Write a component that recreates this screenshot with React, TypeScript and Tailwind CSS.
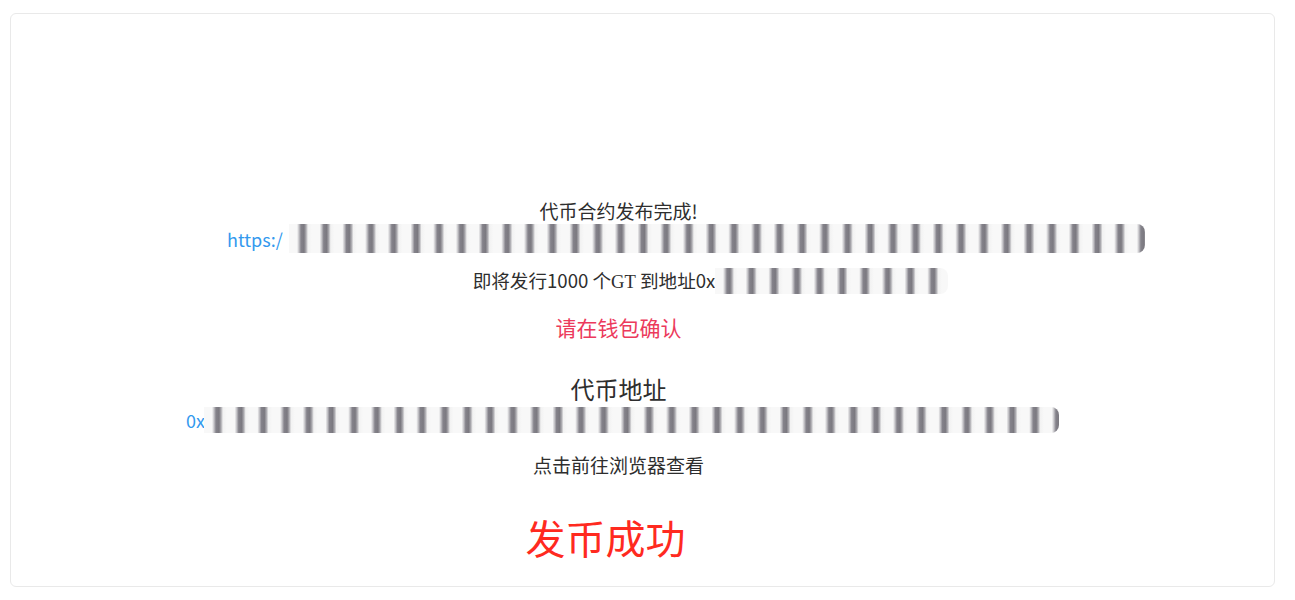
const stripes =
  'bg-[image:repeating-linear-gradient(90deg,#f8f8f8_0px,#f8f8f8_8px,#c4c3c7_10px,#84828a_12px,#7b7980_15px,#aaa9ae_17px,#f2f2f2_19px,#f8f8f8_22.7px)]';

const Redacted = ({ width, height }: { width: number; height: number }) => (
  <div className={`${stripes} rounded-r-lg shrink-0`} style={{ width, height }} />
);

const App = () => {
  return (
    <div className="min-h-screen bg-white pt-[13px] pl-[10px] pr-[20px] font-['Noto_Sans_CJK_SC','Noto_Sans',sans-serif] text-[#2e2e2e]">
      <div className="h-[574px] rounded-md border border-[#e9e9e9] bg-white">
        <div className="flex flex-col items-center pr-[48px] pt-[182px]">
          <div className="h-[28px] flex items-center text-[19px] leading-none">代币合约发布完成!</div>

          <div className="h-[29px] flex items-center pl-[135px]">
            <span className="w-[62px] whitespace-nowrap text-[18px] leading-none text-[#3399ee]">https:/</span>
            <Redacted width={856} height={29} />
          </div>

          <div className="mt-[13px] h-[30px] flex items-center pl-[184px]">
            <span className="text-[18.6px] leading-none whitespace-nowrap">
              即将发行1000 个<span className="font-['Liberation_Serif',serif]">GT</span> 到地址0x
            </span>
            <Redacted width={233} height={26} />
          </div>

          <div className="mt-[16px] h-[30px] flex items-center text-[21px] leading-none text-[#ec3a5c]">请在钱包确认</div>

          <div className="mt-[32px] h-[30px] flex items-center text-[24px] leading-none">代币地址</div>

          <div className="mt-[2px] h-[28px] flex items-center pl-[8px]">
            <span className="w-[18px] whitespace-nowrap text-[18px] leading-none text-[#3399ee]">0x</span>
            <Redacted width={855} height={26} />
          </div>

          <div className="mt-[16px] h-[28px] flex items-center text-[19px] leading-none">点击前往浏览器查看</div>

          <div className="mt-[34px] h-[50px] flex items-center pr-[26px] text-[40px] leading-none text-[#ff2a1f]">发币成功</div>
        </div>
      </div>
    </div>
  );
};

export default App;
